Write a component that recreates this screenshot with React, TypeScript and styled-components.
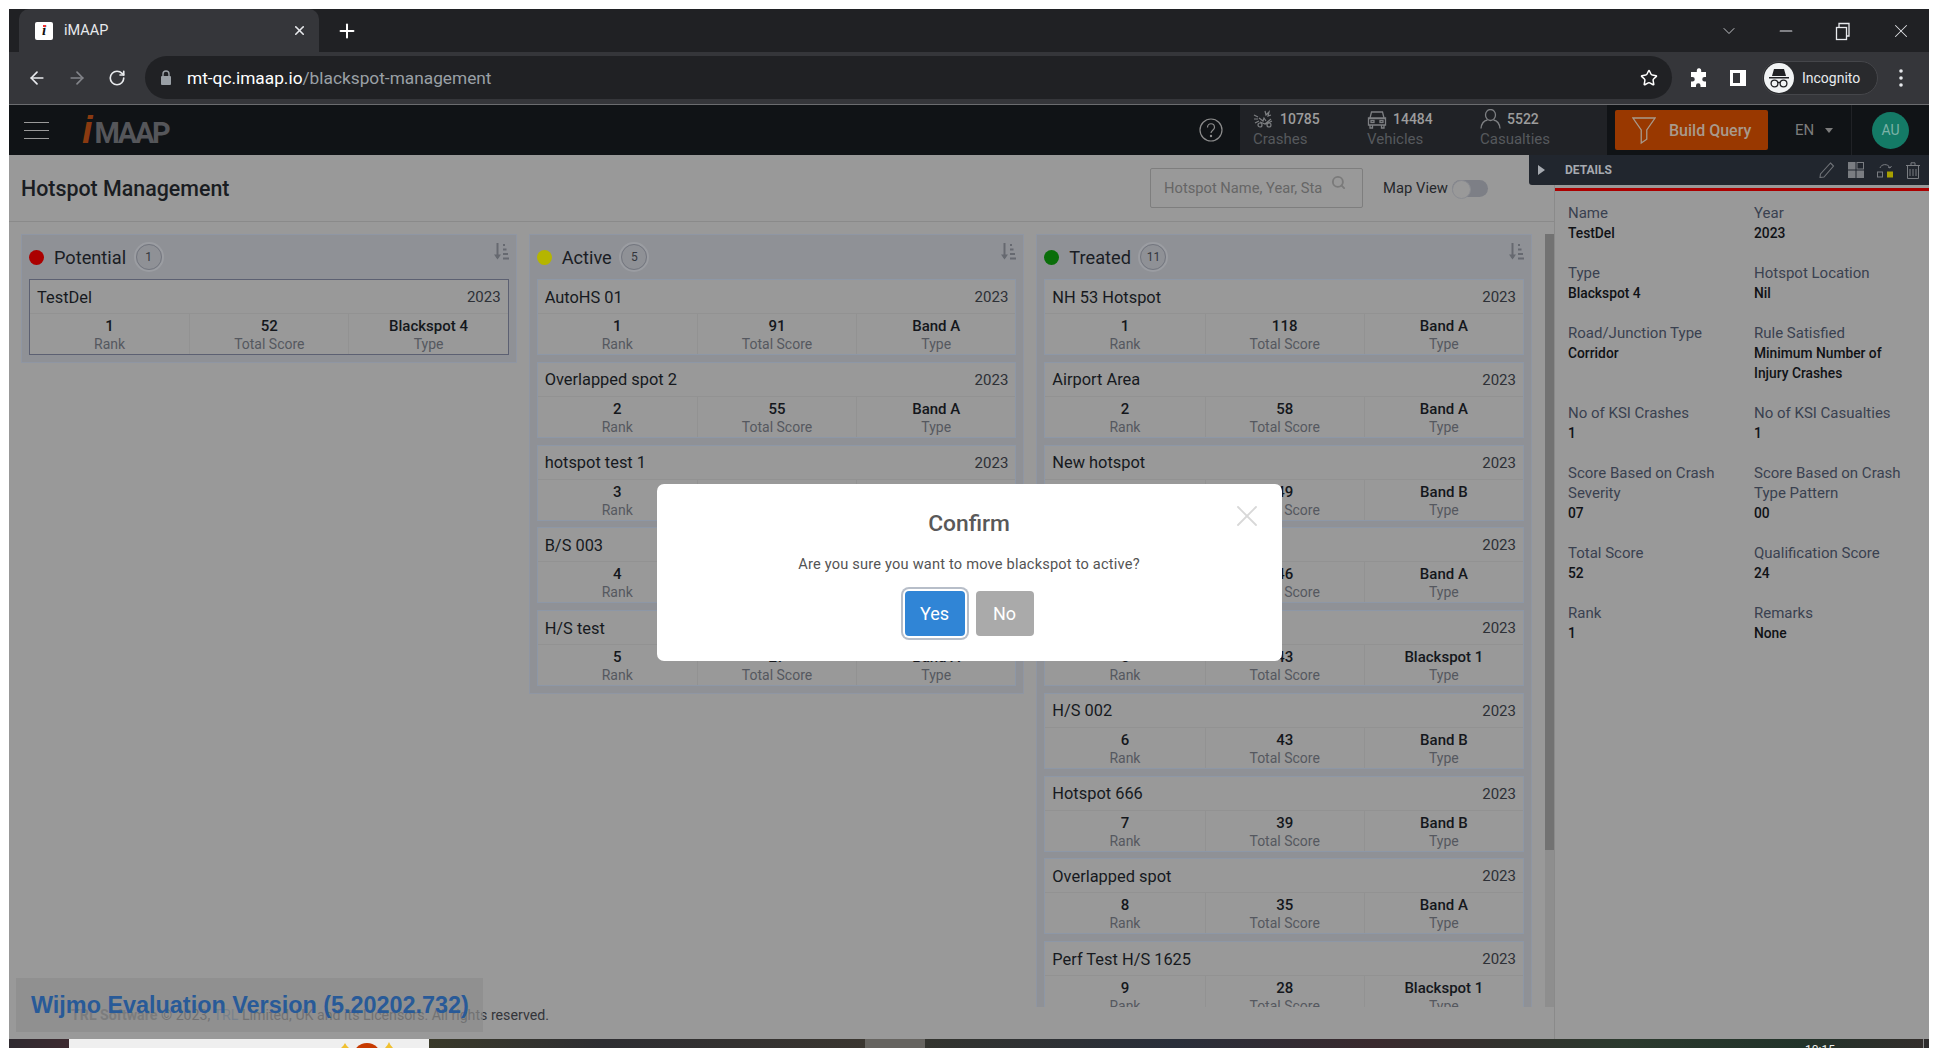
import React from "react";
import styled, { createGlobalStyle } from "styled-components";
import { ArrowLeft, ArrowRight, RotateCw, Star, Plus, X, ChevronDown, Minus, Search } from "lucide-react";

const Global = createGlobalStyle`
  html, body { margin: 0; padding: 0; background: #fff; }
  body { font-family: Roboto, "Liberation Sans", sans-serif; overflow: hidden; }
  * { box-sizing: border-box; }
`;

const Screen = styled.div`
  width: 1938px; height: 1048px; padding: 9px 9px 0 9px;
  display: flex; flex-direction: column; overflow: hidden; background: #fff;
`;
const Browser = styled.div`
  height: 1030px; display: flex; flex-direction: column; background: #999;
`;
const TabStrip = styled.div`
  height: 43px; flex: none; background: #202124; display: flex; align-items: center; padding-left: 10px; color: #fff;
`;
const Tab = styled.div`
  width: 300px; height: 43px; background: #35363a; border-radius: 10px 10px 0 0;
  display: flex; align-items: center; padding: 0 12px 0 16px; gap: 11px; font-size: 14.5px; color: #e8eaed;
  span { flex: 1; }
`;
const Favicon = styled.div`
  width: 18px; height: 18px; background: #fff; border-radius: 2px; display: flex; align-items: center; justify-content: center;
  font: italic 700 15px "Liberation Serif", serif; color: #111; position: relative;
  &::after { content: ""; position: absolute; left: 8px; top: 3px; width: 3px; height: 2px; background: #e33; }
`;
const NewTab = styled.div`
  margin-left: 17px; display: flex;
`;
const WindowControls = styled.div`
  margin-left: auto; display: flex; align-items: center; height: 100%; padding-right: 17px; gap: 37px; color: #dfe1e5;
`;
const RestoreIcon = () => (
  <svg width="20" height="20" viewBox="0 0 20 20" fill="none" stroke="#e8eaed" strokeWidth="1.3">
    <rect x="3.5" y="6.5" width="10" height="12" />
    <path d="M6 6V2.5h10V15h-2.5" />
  </svg>
);
const Toolbar = styled.div`
  height: 53px; flex: none; background: #35363a; border-bottom: 1px solid #6b6c6f; display: flex; align-items: center; padding: 0 16px 1px 8px; color: #e8eaed;
`;
const NavButton = styled.div<{ $off?: boolean }>`
  width: 40px; display: flex; justify-content: center; color: ${(p) => (p.$off ? "#83858a" : "#e8eaed")};
`;
const Omnibox = styled.div`
  width: 1527px; height: 43px; margin-left: 8px; border-radius: 22px; background: #202124;
  display: flex; align-items: center; padding: 0 14px 0 15px; font-size: 17.3px; color: #fff;
  b { font-weight: 400; color: #9aa0a6; }
`;
const Url = styled.div`
  margin-left: 15px; flex: 1; padding-top: 1px;
`;
const ToolIcons = styled.div`
  display: flex; align-items: center; flex: 1; padding-left: 17px;
`;
const IncognitoPill = styled.div`
  width: 116px; height: 34px; margin-left: 15px; border: 1px solid #45464a; border-radius: 17px; background: #292a2d;
  display: flex; align-items: center; gap: 8px; padding-left: 1px; font-size: 14px; color: #e8eaed;
`;
const IncognitoFace = styled.div`
  width: 30px; height: 30px; border-radius: 50%; background: #f1f3f4; display: flex; align-items: center; justify-content: center;
`;
const ToolGap = styled.div`
  width: 20px; flex: none;
`;
const ToolMenu = styled.div`
  margin-left: 21px; display: flex;
`;
const AppArea = styled.div`
  flex: 1; min-height: 0; display: flex; flex-direction: column; position: relative; background: #999;
`;
const Header = styled.header`
  height: 50px; flex: none; background: #101316; display: flex; align-items: center; padding-left: 15px; color: #9a9a9a;
`;
const Burger = styled.div`
  width: 25px; display: flex; flex-direction: column; gap: 7px;
  i { display: block; height: 1px; background: #9a9a9a; }
`;
const Logo = styled.div`
  margin-left: 33px; display: flex; align-items: baseline; font-weight: 700; font-size: 29px; letter-spacing: -2.4px; color: #55565a; line-height: 1;
  em { font-size: 38px; color: #8a3a10; margin-right: 2px; letter-spacing: 0; font-family: "Liberation Sans", sans-serif; }
`;
const HelpWrap = styled.div`
  margin-left: auto; margin-right: 17px; display: flex;
`;
const Stats = styled.div`
  height: 50px; width: 367px; background: #202226; display: flex; padding-left: 13px;
`;
const Stat = styled.div<{ $w: number }>`
  width: ${(p) => p.$w}px; display: flex; flex-direction: column; padding-top: 4px;
`;
const StatTop = styled.div`
  display: flex; align-items: center; gap: 6px; font-size: 14px; font-weight: 500; color: #9c9c9c; height: 20px;
`;
const StatLabel = styled.div`
  font-size: 15px; color: #56595d; line-height: 20px; white-space: nowrap;
`;
const QueryButton = styled.div`
  margin-left: 8px; width: 153px; height: 40px; background: #993800; border-radius: 2px; display: flex; align-items: center;
  padding-left: 17px; gap: 13px; font-size: 16px; font-weight: 500; color: #a89a8c;
`;
const Lang = styled.div`
  width: 84px; height: 50px; display: flex; align-items: center; padding-left: 27px; gap: 11px; font-size: 15px; color: #7c7c7c; border-right: 1px solid #202226;
  i { width: 0; height: 0; border-left: 4.5px solid transparent; border-right: 4.5px solid transparent; border-top: 5px solid #7c7c7c; }
`;
const Avatar = styled.div`
  width: 37px; height: 37px; margin: 0 20px; border-radius: 50%; background: #147a66; color: #7cb3a8; font-size: 14px;
  display: flex; align-items: center; justify-content: center;
`;
const Workspace = styled.div`
  flex: 1; min-height: 0; display: flex;
`;
const Main = styled.main`
  flex: 1; min-width: 0; display: flex; flex-direction: column; position: relative;
`;
const TitleBar = styled.div`
  height: 67px; flex: none; border-bottom: 1px solid #8a8a8a; display: flex; align-items: center; padding: 0 66px 0 12px;
`;
const PageTitle = styled.h1`
  margin: 0 auto 0 0; font-size: 21.4px; font-weight: 500; color: #1a1d22;
`;
const SearchBox = styled.div`
  width: 213px; height: 40px; border: 1px solid #7e7e7e; border-radius: 2px; display: flex; align-items: flex-start; padding: 0 14px 0 13px; color: #7a7a7a;
  svg { margin-top: 6px; flex: none; margin-left: 9px; }
`;
const SearchInput = styled.input`
  width: 158px; height: 38px; flex: none; border: 0; outline: 0; padding: 0; background: transparent; font: 14.7px Roboto, sans-serif;
  &::placeholder { color: #666; opacity: 1; }
`;
const MapLabel = styled.div`
  margin-left: 20px; font-size: 14.8px; color: #26282c; margin-right: 1px;
`;
const Toggle = styled.div`
  width: 36px; height: 17px; margin-left: 3px; border-radius: 9px; background: #7d7f86; position: relative;
  &::before { content: ""; position: absolute; left: 0; top: 0; width: 17px; height: 17px; border-radius: 50%; background: #999; border: 1px solid #8a8c92; }
`;
const BoardArea = styled.div`
  height: 785px; flex: none; display: flex; padding-top: 12px; overflow: hidden;
`;
const Columns = styled.div`
  width: 1511px; margin-left: 12px; display: grid; grid-template-columns: repeat(3, 1fr); column-gap: 12px; align-items: start; overflow: hidden;
`;
const Column = styled.section`
  background: #8f9196; border: 1px solid #8f96a3; padding: 0 7px 7px;
`;
const ColumnHead = styled.div`
  height: 44px; display: flex; align-items: center; font-size: 18.2px; color: #1a1d24;
`;
const Dot = styled.span<{ $c: string }>`
  width: 15px; height: 15px; border-radius: 50%; background: ${(p) => p.$c}; margin-right: 10px;
`;
const CountBadge = styled.span`
  width: 26px; height: 26px; margin-left: 9.5px; border-radius: 50%; border: 1px solid #73767f; box-shadow: 0 0 0 2px #9b9da2;
  display: flex; align-items: center; justify-content: center; font-size: 12px; color: #33363c;
`;
const SortWrap = styled.div`
  margin-left: auto; margin-top: -11px; display: flex;
`;
const CardList = styled.div`
  display: flex; flex-direction: column; gap: 6.75px;
`;
const Card = styled.article<{ $sel?: boolean }>`
  height: 76px; flex: none; background: #999; border: 1px solid ${(p) => (p.$sel ? "#5c6072" : "#8d97a6")}; display: flex; flex-direction: column;
`;
const CardHead = styled.div`
  height: 34px; flex: none; display: flex; align-items: center; justify-content: space-between; padding: 1px 7px 0; border-bottom: 1px solid #929292; font-size: 16.4px; color: #16191e;
  span { font-size: 15px; color: #2d3036; }
`;
const CardBody = styled.div`
  flex: 1; display: grid; grid-template-columns: repeat(3, 1fr);
`;
const Cell = styled.div`
  display: flex; flex-direction: column; align-items: center; padding-top: 3px; border-left: 1px solid #929292; line-height: 17px;
  &:first-child { border-left: 0; }
`;
const CellValue = styled.div`
  font-size: 15px; font-weight: 500; color: #14171c; line-height: 18px; white-space: nowrap; margin-bottom: 1px;
`;
const CellLabel = styled.div`
  font-size: 14px; color: #55585f;
`;
const ScrollTrack = styled.div`
  width: 9px; margin-left: 13px; flex: none; background: #8e8e8e;
`;
const ScrollThumb = styled.div`
  height: 616px; background: #727272;
`;
const Footer = styled.footer`
  flex: 1; padding: 0 0 0 62px; font-size: 14.2px; color: #33353a; line-height: 17px; white-space: nowrap;
  b { color: #55575c; font-weight: 700; }
  u { text-decoration: none; color: #4a6a92; }
`;
const Watermark = styled.div`
  position: absolute; left: 7px; bottom: 7px; width: 467px; height: 54px; background: rgba(139, 139, 139, 0.7);
  display: flex; align-items: center; padding-left: 15px; font: 700 23.4px "Liberation Sans", Arial, sans-serif; color: #285a98; white-space: nowrap;
`;
const Sidebar = styled.aside`
  width: 375px; flex: none; border-left: 1px solid #8a8a8a; display: flex; flex-direction: column;
`;
const DetailsHead = styled.div`
  height: 30px; margin-left: -26px; flex: none; position: relative; background: #21262e; border-radius: 0 0 0 3px;
  display: flex; align-items: center; padding-left: 9px; font-size: 12px; font-weight: 700; color: #a6aab0;
`;
const Caret = styled.i`
  width: 0; height: 0; border-top: 5px solid transparent; border-bottom: 5px solid transparent; border-left: 7px solid #a6aab0; margin-right: 20px;
`;
const HeadIcons = styled.div`
  margin-left: auto; padding-right: 9px; display: flex; gap: 13px; align-items: center;
`;
const RedLine = styled.div`
  height: 3px; margin-top: 3px; flex: none; background: #ab0000;
`;
const DetailGrid = styled.div`
  padding: 12px 0 0 13px; display: grid; grid-template-columns: 186px 1fr; row-gap: 20px; font-size: 14px; line-height: 20px;
`;
const Detail = styled.div`
  padding-right: 18px;
`;
const DetailLabel = styled.div`
  color: #3a4150; font-size: 15px;
`;
const DetailValue = styled.div`
  color: #101216; font-weight: 500; font-size: 13.8px;
`;
const Backdrop = styled.div`
  position: absolute; inset: 0; display: flex; align-items: center; justify-content: center;
`;
const Modal = styled.div`
  width: 625px; height: 177px; background: #fff; border-radius: 7px; position: relative; display: flex; flex-direction: column; align-items: center; padding-top: 26px;
`;
const ModalClose = styled.div`
  position: absolute; right: 17px; top: 14px; display: flex;
`;
const ModalTitle = styled.h2`
  margin: 0; font-size: 22.8px; font-weight: 500; line-height: 28px; color: #595959;
`;
const ModalText = styled.p`
  margin: 16px 0 0; font: 14.6px/20px Roboto, sans-serif; color: #545454; letter-spacing: 0.2px;
`;
const ModalActions = styled.div`
  margin-top: 17px; display: flex; gap: 11px;
`;
const ModalButton = styled.div<{ $primary?: boolean }>`
  height: 45px; width: ${(p) => (p.$primary ? 60 : 58)}px; border-radius: 4px; background: ${(p) => (p.$primary ? "#3085d6" : "#aaaaaa")}; color: #fff; font-size: 18px;
  display: flex; align-items: center; justify-content: center;
  ${(p) => (p.$primary ? "box-shadow: 0 0 0 2px #fff, 0 0 0 4px rgba(50, 70, 100, 0.35);" : "")}
`;
const Desktop = styled.div`
  height: 9px; width: 1920px; flex: none; display: flex; overflow: hidden;
`;
const DeskPart = styled.div<{ $w?: number; $bg: string }>`
  ${(p) => (p.$w ? `width: ${p.$w}px; flex: none;` : "flex: 1;")} background: ${(p) => p.$bg}; display: flex;
`;
const SunSlot = styled.div`
  margin-left: 268px; display: flex;
`;
const DeskEdge = styled.div`
  width: 6px; flex: none; background: #2d2b2b; border-left: 1px solid #8a8a8a;
`;
const Clock = styled.div`
  padding: 5px 0 0 880px; font-size: 12px; line-height: 12px; color: #eee; white-space: nowrap;
`;

const CrashIcon = () => (
  <svg width="21" height="19" viewBox="0 0 21 19" fill="none" stroke="#7d7f82" strokeWidth="1.2">
    <path d="M1 5l4 2M1 9h4M2 13l4-2M12 1l1 4 3-3-1 4 3-1" />
    <path d="M6 8l4 3 1-3 2 3M7 12l5 2 6-5M13 14l6-3" />
    <circle cx="7" cy="15" r="2" />
    <circle cx="16" cy="15" r="2" />
  </svg>
);
const CarIcon = () => (
  <svg width="20" height="19" viewBox="0 0 20 19" fill="none" stroke="#7d7f82" strokeWidth="1.3">
    <path d="M3 8l1.5-6h11L17 8M1.5 8h17v7h-17zM3 15v3h2.5v-3M14.5 15v3H17v-3M1.500 8.500h17" />
    <rect x="4" y="10.500" width="3" height="2" />
    <rect x="13" y="10.500" width="3" height="2" />
  </svg>
);
const UserIcon = () => (
  <svg width="21" height="20" viewBox="0 0 21 20" fill="none" stroke="#7d7f82" strokeWidth="1.3">
    <ellipse cx="10.500" cy="6" rx="5" ry="5.500" />
    <path d="M1 19.500c.5-5 3.500-8 6.500-8.500M20 19.500c-.5-5-3.500-8-6.500-8.500" />
  </svg>
);
const SortIcon = () => (
  <svg width="15" height="17" viewBox="0 0 15 17" fill="none" stroke="#666970" strokeWidth="2">
    <path d="M3.500 0v15" />
    <path d="M0 11.500h7L3.500 16.500z" fill="#666970" stroke="none" />
    <path d="M9 2h2M9 6.500h3.500M9 11h5M9 15.500h6" />
  </svg>
);
const FunnelIcon = () => (
  <svg width="24" height="32" viewBox="0 0 26 32" fill="none" stroke="#a89a8c" strokeWidth="1.4">
    <path d="M1 3h24L16 16v10l-6 4V16z" />
  </svg>
);
const HelpIcon = () => (
  <svg width="24" height="24" viewBox="0 0 24 24" fill="none" stroke="#8c8c8c" strokeWidth="1.2">
    <circle cx="12" cy="12" r="11" />
    <path d="M8.500 9.500c0-5 7-5 7 0 0 2.500-3.500 3-3.500 5.500" />
    <circle cx="12" cy="18" r=".6" fill="#8c8c8c" />
  </svg>
);
const PuzzleIcon = () => (
  <svg width="20" height="20" viewBox="0 0 20 20" fill="#fff">
    <path d="M8 1.500a2.200 2.200 0 0 1 4.200 1V4H17v5h-1.500a2.200 2.200 0 0 0 0 4.500H17V19h-5.500v-1.500a2.200 2.200 0 0 0-4.500 0V19H2v-5.500h1.500a2.200 2.200 0 0 0 0-4.500H2V4h5.800V2.500z" />
  </svg>
);
const PanelIcon = () => (
  <svg width="18" height="18" viewBox="0 0 18 18">
    <rect x="1" y="1" width="16" height="16" fill="#fff" />
    <rect x="4" y="4" width="7" height="10" fill="#35363a" />
  </svg>
);
const LockIcon = () => (
  <svg width="12" height="15" viewBox="0 0 12 15" fill="#9aa0a6">
    <rect x="1" y="6" width="10" height="9" rx="1" />
    <path d="M3 6V4a3 3 0 0 1 6 0v2" fill="none" stroke="#9aa0a6" strokeWidth="1.400" />
  </svg>
);
const IncognitoGlyph = () => (
  <svg width="24" height="24" viewBox="0 0 24 24" fill="#202124">
    <path d="M7 3h10l2 7H5zM2 11h20v1.500H2z" />
    <circle cx="7.500" cy="17.500" r="3.400" fill="none" stroke="#202124" strokeWidth="1.300" />
    <circle cx="16.500" cy="17.500" r="3.400" fill="none" stroke="#202124" strokeWidth="1.300" />
    <path d="M10.500 16.500h3" stroke="#202124" strokeWidth="1.300" />
  </svg>
);
const Kebab = () => (
  <svg width="4" height="20" viewBox="0 0 4 20" fill="#e8eaed">
    <circle cx="2" cy="3" r="1.800" />
    <circle cx="2" cy="10" r="1.800" />
    <circle cx="2" cy="17" r="1.800" />
  </svg>
);
const PencilIcon = () => (
  <svg width="16" height="16" viewBox="0 0 16 16" fill="none" stroke="#6f7277" strokeWidth="1.100">
    <path d="M11.500 1l3 3L5 15l-4 .5.500-3.500z" />
  </svg>
);
const GridIcon = () => (
  <svg width="16" height="16" viewBox="0 0 16 16">
    <rect x="0" y="0" width="7.500" height="7.500" fill="#7a7d82" />
    <rect x="9" y="0.500" width="6.500" height="6.500" fill="none" stroke="#7a7d82" />
    <rect x="0" y="8.500" width="7.500" height="7.500" fill="#7a7d82" />
    <rect x="8.500" y="8.500" width="7.500" height="7.500" fill="#7a7d82" />
  </svg>
);
const MoveIcon = () => (
  <svg width="16" height="16" viewBox="0 0 16 16" fill="none" stroke="#7a7d82">
    <rect x="0.500" y="10" width="5" height="5" />
    <rect x="10" y="9.500" width="6" height="6" fill="#a8a000" stroke="none" />
    <path d="M3 6c1-4 8-5 10 0M13 6l-2-1M13 6l1.500-2" />
  </svg>
);
const TrashIcon = () => (
  <svg width="14" height="17" viewBox="0 0 14 17" fill="none" stroke="#7a7d82">
    <path d="M0 3.500h14M5 3V.800h4V3M1.500 4v12.500h11V4M4 7v7M7 7v7M10 7v7" />
  </svg>
);
const SunDrawing = () => (
  <svg width="60" height="9" viewBox="0 0 60 9">
    <circle cx="30" cy="18" r="14" fill="#c73a00" />
    <path d="M8 4l1.500 2.500L12 9H4l2.500-2.500zM52 3l1.500 3L56 9h-8l2.500-3z" fill="#f0c030" />
  </svg>
);

type Row = [string, string, string, string?];
const Potential: Row[] = [["TestDel", "1", "52", "Blackspot 4"]];
const Active: Row[] = [
  ["AutoHS 01", "1", "91", "Band A"],
  ["Overlapped spot 2", "2", "55", "Band A"],
  ["hotspot test 1", "3", "45", "Band A"],
  ["B/S 003", "4", "35", "Band A"],
  ["H/S test", "5", "27", "Band A"],
];
const Treated: Row[] = [
  ["NH 53 Hotspot", "1", "118", "Band A"],
  ["Airport Area", "2", "58", "Band A"],
  ["New hotspot", "3", "49", "Band B"],
  ["Hotspot 4", "4", "46", "Band A"],
  ["Hotspot 5", "5", "43", "Blackspot 1"],
  ["H/S 002", "6", "43", "Band B"],
  ["Hotspot 666", "7", "39", "Band B"],
  ["Overlapped spot", "8", "35", "Band A"],
  ["Perf Test H/S 1625", "9", "28", "Blackspot 1"],
];
const Boards = [
  { name: "Potential", color: "#ab0000", count: 1, rows: Potential, sel: true },
  { name: "Active", color: "#b5b500", count: 5, rows: Active, sel: false },
  { name: "Treated", color: "#0a6e0a", count: 11, rows: Treated, sel: false },
];
const DetailRows: [string, string][] = [
  ["Name", "TestDel"],
  ["Year", "2023"],
  ["Type", "Blackspot 4"],
  ["Hotspot Location", "Nil"],
  ["Road/Junction Type", "Corridor"],
  ["Rule Satisfied", "Minimum Number of Injury Crashes"],
  ["No of KSI Crashes", "1"],
  ["No of KSI Casualties", "1"],
  ["Score Based on Crash Severity", "07"],
  ["Score Based on Crash Type Pattern", "00"],
  ["Total Score", "52"],
  ["Qualification Score", "24"],
  ["Rank", "1"],
  ["Remarks", "None"],
];

export default function App() {
  return (
    <Screen>
      <Global />
      <Browser>
        <TabStrip>
          <Tab>
            <Favicon>i</Favicon>
            <span>iMAAP</span>
            <X size={15} strokeWidth={2.5} />
          </Tab>
          <NewTab><Plus size={22} strokeWidth={2.2} /></NewTab>
          <WindowControls>
            <ChevronDown size={20} strokeWidth={1} />
            <Minus size={20} strokeWidth={1.3} />
            <RestoreIcon />
            <X size={22} strokeWidth={1.1} />
          </WindowControls>
        </TabStrip>
        <Toolbar>
          <NavButton><ArrowLeft size={20} /></NavButton>
          <NavButton $off><ArrowRight size={20} /></NavButton>
          <NavButton><RotateCw size={18} strokeWidth={2.2} /></NavButton>
          <Omnibox>
            <LockIcon />
            <Url>mt-qc.imaap.io<b>/blackspot-management</b></Url>
            <Star size={18} />
          </Omnibox>
          <ToolIcons>
            <PuzzleIcon />
            <ToolGap />
            <PanelIcon />
            <IncognitoPill>
              <IncognitoFace><IncognitoGlyph /></IncognitoFace>
              Incognito
            </IncognitoPill>
            <ToolMenu><Kebab /></ToolMenu>
          </ToolIcons>
        </Toolbar>
        <AppArea>
          <Header>
            <Burger><i /><i /><i /></Burger>
            <Logo><em>i</em>MAAP</Logo>
            <HelpWrap><HelpIcon /></HelpWrap>
            <Stats>
              <Stat $w={114}>
                <StatTop><CrashIcon />10785</StatTop>
                <StatLabel>Crashes</StatLabel>
              </Stat>
              <Stat $w={113}>
                <StatTop><CarIcon />14484</StatTop>
                <StatLabel>Vehicles</StatLabel>
              </Stat>
              <Stat $w={100}>
                <StatTop><UserIcon />5522</StatTop>
                <StatLabel>Casualties</StatLabel>
              </Stat>
            </Stats>
            <QueryButton><FunnelIcon />Build Query</QueryButton>
            <Lang>EN<i /></Lang>
            <Avatar>AU</Avatar>
          </Header>
          <Workspace>
            <Main>
              <TitleBar>
                <PageTitle>Hotspot Management</PageTitle>
                <SearchBox>
                  <SearchInput placeholder="Hotspot Name, Year, Status" readOnly />
                  <Search size={15} strokeWidth={3} />
                </SearchBox>
                <MapLabel>Map View</MapLabel>
                <Toggle />
              </TitleBar>
              <BoardArea>
                <Columns>
                  {Boards.map((b) => (
                    <Column key={b.name}>
                      <ColumnHead>
                        <Dot $c={b.color} />
                        {b.name}
                        <CountBadge>{b.count}</CountBadge>
                        <SortWrap><SortIcon /></SortWrap>
                      </ColumnHead>
                      <CardList>
                        {b.rows.map((r) => (
                          <Card key={r[0]} $sel={b.sel}>
                            <CardHead>{r[0]}<span>2023</span></CardHead>
                            <CardBody>
                              <Cell><CellValue>{r[1]}</CellValue><CellLabel>Rank</CellLabel></Cell>
                              <Cell><CellValue>{r[2]}</CellValue><CellLabel>Total Score</CellLabel></Cell>
                              <Cell><CellValue>{r[3]}</CellValue><CellLabel>Type</CellLabel></Cell>
                            </CardBody>
                          </Card>
                        ))}
                      </CardList>
                    </Column>
                  ))}
                </Columns>
                <ScrollTrack><ScrollThumb /></ScrollTrack>
              </BoardArea>
              <Footer>
                <b>TRL Software</b> © 2023, <u>TRL</u> Limited, UK and its Licensors. All rights reserved.
              </Footer>
              <Watermark>Wijmo Evaluation Version (5.20202.732)</Watermark>
            </Main>
            <Sidebar>
              <DetailsHead>
                <Caret />
                DETAILS
                <HeadIcons>
                  <PencilIcon /><GridIcon /><MoveIcon /><TrashIcon />
                </HeadIcons>
              </DetailsHead>
              <RedLine />
              <DetailGrid>
                {DetailRows.map(([k, v]) => (
                  <Detail key={k}>
                    <DetailLabel>{k}</DetailLabel>
                    <DetailValue>{v}</DetailValue>
                  </Detail>
                ))}
              </DetailGrid>
            </Sidebar>
          </Workspace>
          <Backdrop>
            <Modal>
              <ModalClose><X size={36} strokeWidth={1.2} color="#d8d8d8" /></ModalClose>
              <ModalTitle>Confirm</ModalTitle>
              <ModalText>Are you sure you want to move blackspot to active?</ModalText>
              <ModalActions>
                <ModalButton $primary>Yes</ModalButton>
                <ModalButton>No</ModalButton>
              </ModalActions>
            </Modal>
          </Backdrop>
        </AppArea>
      </Browser>
      <Desktop>
        <DeskPart $w={60} $bg="linear-gradient(90deg,#2f2a30,#3d2a30)" />
        <DeskPart $w={360} $bg="#efefef"><SunSlot><SunDrawing /></SunSlot></DeskPart>
        <DeskPart $w={436} $bg="linear-gradient(90deg,#3a3a2a,#2e2e32 40%,#3a3630 100%)" />
        <DeskPart $w={60} $bg="#666460" />
        <DeskPart $bg="linear-gradient(90deg,#33342f,#2a2f3a 25%,#3a2a2e 45%,#2c3a2e 70%,#22332a 88%,#332e2c)"><Clock>10:15</Clock></DeskPart>
        <DeskEdge />
      </Desktop>
    </Screen>
  );
}
